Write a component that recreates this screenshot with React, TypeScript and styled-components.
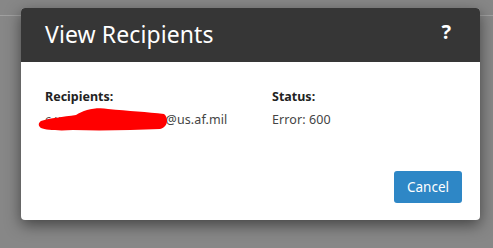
import React from "react";
import styled, { createGlobalStyle } from "styled-components";

const GlobalStyle = createGlobalStyle`
  html, body {
    margin: 0;
    padding: 0;
    width: 493px;
    height: 248px;
    overflow: hidden;
    background: #878787;
    font-family: "Open Sans", "Noto Sans", Arial, sans-serif;
  }
`;

const Backdrop = styled.div`
  position: relative;
  width: 493px;
  height: 248px;
  background: #878787;
  box-sizing: border-box;
  padding: 8px 0 0 21px;
`;

const PageLine = styled.div`
  position: absolute;
  left: 0;
  right: 0;
  top: 15px;
  height: 1px;
  background: #a0a0a0;
`;

const Modal = styled.div`
  position: relative;
  width: 459px;
  height: 212px;
  background: #fff;
  border-radius: 4px;
  box-shadow: 0 5px 15px rgba(0, 0, 0, 0.5);
  display: flex;
  flex-direction: column;
  overflow: hidden;
`;

const Header = styled.div`
  height: 54px;
  background: #363636;
  display: flex;
  align-items: center;
  justify-content: space-between;
  padding: 0 29px 0 24px;
  box-sizing: border-box;
`;

const Title = styled.h1`
  margin: 0;
  font-family: "Noto Sans", "Open Sans", sans-serif;
  font-weight: 400;
  font-size: 23px;
  color: #fff;
  letter-spacing: 0.1px;
  line-height: 1;
  padding-bottom: 1px;
`;

const Help = styled.span`
  font-family: "Noto Sans", sans-serif;
  font-weight: 700;
  font-size: 20px;
  color: #fff;
  line-height: 1;
  padding-bottom: 6px;
`;

const Body = styled.div`
  flex: 1;
  display: flex;
  flex-direction: column;
  padding: 27px 18px 17px 24px;
`;

const Columns = styled.div`
  display: grid;
  grid-template-columns: 227px 1fr;
`;

const Field = styled.div`
  display: flex;
  flex-direction: column;
  gap: 7px;
`;

const Label = styled.div`
  font-family: "Noto Sans", sans-serif;
  font-weight: 700;
  font-size: 12.5px;
  color: #222;
  line-height: 16px;
`;

const Value = styled.div`
  position: relative;
  font-family: "Noto Sans", sans-serif;
  font-size: 12.5px;
  color: #444;
  line-height: 16px;
  white-space: nowrap;
  letter-spacing: 0.1px;
`;

const Hidden = styled.span`
  color: #555;
`;

const Redaction = styled.svg`
  position: absolute;
  left: -7px;
  top: -9px;
`;

const Footer = styled.div`
  margin-top: auto;
  display: flex;
  justify-content: flex-end;
`;

const Button = styled.button`
  width: 68px;
  height: 32px;
  border: none;
  border-radius: 3px;
  background: #2e87c6;
  color: #fff;
  font-family: "Noto Sans", sans-serif;
  font-size: 13.5px;
  cursor: pointer;
`;

export default function App() {
  return (
    <>
      <GlobalStyle />
      <Backdrop>
        <PageLine />
        <Modal>
          <Header>
            <Title>View Recipients</Title>
            <Help>?</Help>
          </Header>
          <Body>
            <Columns>
              <Field>
                <Label>Recipients:</Label>
                <Value>
                  <Hidden>c.xxxxx.xxxx.x.xxxxx</Hidden>@us.af.mil
                  <Redaction width="130" height="32" viewBox="0 0 130 32">
                    <path
                      d="M3 18 C 12 15, 25 14, 38 12 C 46 7, 58 4, 70 6 C 90 8, 110 9, 126 11 C 131 15, 130 24, 122 26 C 95 27, 65 28, 35 27 C 20 28, 8 27, 3 25 C 0 23, 0 20, 3 18 Z"
                      fill="#ff0000"
                    />
                  </Redaction>
                </Value>
              </Field>
              <Field>
                <Label>Status:</Label>
                <Value>Error: 600</Value>
              </Field>
            </Columns>
            <Footer>
              <Button>Cancel</Button>
            </Footer>
          </Body>
        </Modal>
      </Backdrop>
    </>
  );
}
